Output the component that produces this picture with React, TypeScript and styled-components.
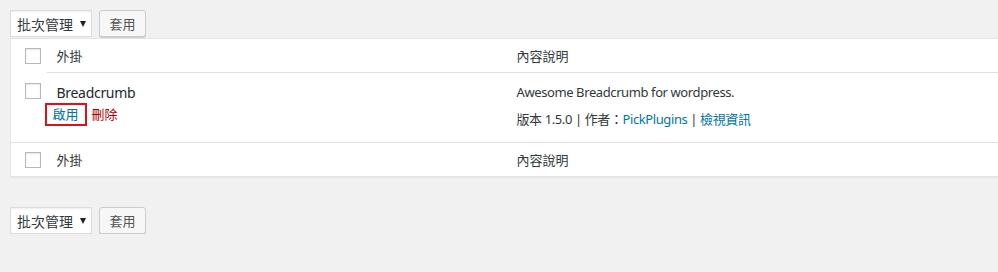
import React from "react";
import styled, { createGlobalStyle } from "styled-components";

const GlobalStyle = createGlobalStyle`
  html, body {
    margin: 0;
    padding: 0;
    background: #f1f1f1;
    overflow: hidden;
  }
  body {
    font-family: "Noto Sans", "Noto Sans CJK TC", sans-serif;
    font-size: 13px;
    color: #32373c;
  }
`;

const Page = styled.div`
  padding: 10px 0 0 10px;
  width: 1300px;
`;

const BulkBar = styled.div<{ $bottom?: boolean }>`
  display: flex;
  align-items: center;
  gap: 7px;
  height: 27px;
  margin-top: ${(p) => (p.$bottom ? "30px" : "0")};
`;

const FakeSelect = styled.div`
  box-sizing: border-box;
  width: 82px;
  height: 27px;
  display: flex;
  align-items: center;
  padding: 0 0 0 6px;
  background: #fff;
  border: 1px solid #ddd;
  box-shadow: inset 0 1px 2px rgba(0, 0, 0, 0.07);
  color: #32373c;
  font-size: 14px;
`;

const Arrow = styled.span`
  margin-left: 7px;
  width: 0;
  height: 0;
  border-left: 3.5px solid transparent;
  border-right: 3.5px solid transparent;
  border-top: 6px solid #222;
`;

const Button = styled.div`
  box-sizing: border-box;
  width: 47px;
  height: 27px;
  display: flex;
  align-items: center;
  justify-content: center;
  background: #f7f7f7;
  border: 1px solid #ccc;
  border-radius: 3px;
  box-shadow: 0 1px 0 #ccc;
  color: #555;
  font-size: 13px;
`;

const Table = styled.table`
  width: 1280px;
  border-collapse: collapse;
  background: #fff;
  border: 1px solid #e5e5e5;
  box-shadow: 0 1px 1px rgba(0, 0, 0, 0.04);
  margin-top: 1px;
  table-layout: fixed;
`;

const CheckCol = styled.col`
  width: 36px;
`;

const NameCol = styled.col`
  width: 460px;
`;

const HeadCell = styled.td<{ $top?: boolean }>`
  height: 33px;
  padding: 0 10px;
  vertical-align: middle;
  color: #32373c;
  ${(p) => (p.$top ? "border-bottom: 1px solid #e1e1e1;" : "border-top: 1px solid #e1e1e1;")}
`;

const CheckCell = styled.td<{ $head?: boolean }>`
  padding: ${(p) => (p.$head ? "0 0 0 14px" : "10px 0 0 14px")};
  vertical-align: ${(p) => (p.$head ? "middle" : "top")};
  box-sizing: border-box;
`;

const Box = styled.span`
  display: block;
  box-sizing: border-box;
  width: 16px;
  height: 16px;
  border: 1px solid #b4b9be;
  background: #fff;
  box-shadow: inset 0 1px 2px rgba(0, 0, 0, 0.1);
`;

const BodyCell = styled.td`
  padding: 10px 10px 13px;
  vertical-align: top;
  line-height: 19px;
  letter-spacing: -0.4px;
`;

const PluginName = styled.div`
  font-size: 14px;
  letter-spacing: -0.3px;
  color: #23282d;
`;

const Actions = styled.div`
  display: flex;
  align-items: center;
  gap: 5px;
  margin-top: 1px;
  margin-left: -12px;
  letter-spacing: 0;
`;

const Highlight = styled.span`
  display: inline-flex;
  align-items: center;
  height: 23px;
  padding: 0 6px;
  border: 2px solid #e0101b;
  box-sizing: border-box;
`;

const Link = styled.a<{ $danger?: boolean }>`
  color: ${(p) => (p.$danger ? "#a00" : "#0073aa")};
  text-decoration: none;
`;

const Desc = styled.p`
  margin: 0;
`;

const Meta = styled.div`
  margin-top: 8px;
`;

const Sep = styled.span`
  color: #32373c;
`;

export default function App() {
  const bulk = (bottom?: boolean) => (
    <BulkBar $bottom={bottom}>
      <FakeSelect>
        <span>批次管理</span>
        <Arrow />
      </FakeSelect>
      <Button>套用</Button>
    </BulkBar>
  );

  return (
    <>
      <GlobalStyle />
      <Page>
        {bulk()}
        <Table>
          <colgroup>
            <CheckCol />
            <NameCol />
            <col />
          </colgroup>
          <tbody>
            <tr>
              <CheckCell as={HeadCell} $top $head>
                <Box />
              </CheckCell>
              <HeadCell $top>外掛</HeadCell>
              <HeadCell $top>內容說明</HeadCell>
            </tr>
            <tr>
              <CheckCell>
                <Box />
              </CheckCell>
              <BodyCell>
                <PluginName>Breadcrumb</PluginName>
                <Actions>
                  <Highlight>
                    <Link href="#">啟用</Link>
                  </Highlight>
                  <Link href="#" $danger>
                    刪除
                  </Link>
                </Actions>
              </BodyCell>
              <BodyCell>
                <Desc>Awesome Breadcrumb for wordpress.</Desc>
                <Meta>
                  版本 1.5.0 <Sep>|</Sep> 作者：<Link href="#">PickPlugins</Link>{" "}
                  <Sep>|</Sep> <Link href="#">檢視資訊</Link>
                </Meta>
              </BodyCell>
            </tr>
            <tr>
              <CheckCell as={HeadCell} $head>
                <Box />
              </CheckCell>
              <HeadCell>外掛</HeadCell>
              <HeadCell>內容說明</HeadCell>
            </tr>
          </tbody>
        </Table>
        {bulk(true)}
      </Page>
    </>
  );
}
